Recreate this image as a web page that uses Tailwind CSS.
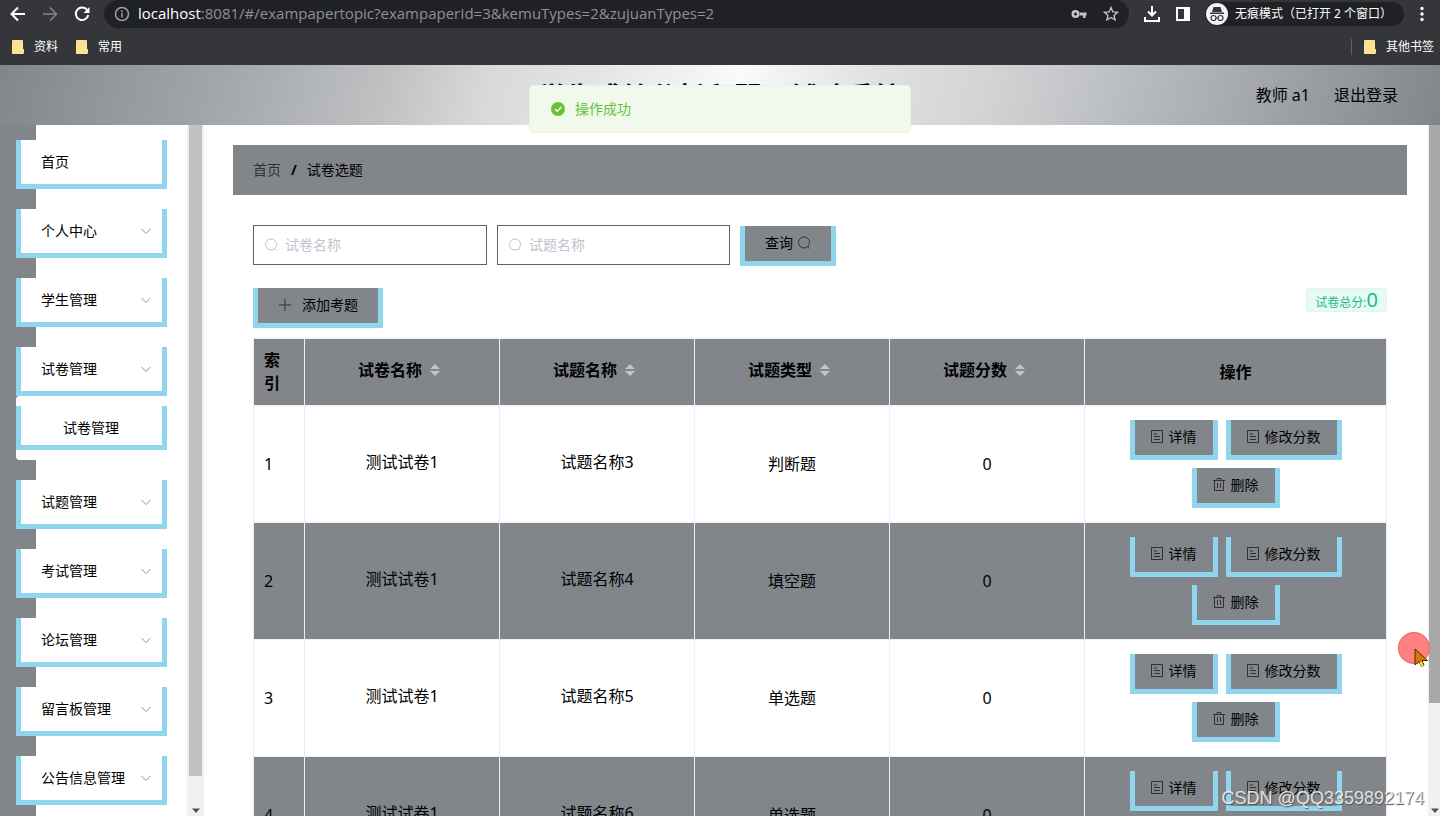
<!DOCTYPE html>
<html lang="zh-CN">
<head>
<meta charset="utf-8">
<title>试卷选题</title>
<script src="https://cdn.jsdelivr.net/npm/@tailwindcss/browser@4"></script>
</head>
<body class="h-screen flex flex-col overflow-hidden bg-white text-black text-sm font-['Noto_Sans','Noto_Sans_CJK_SC',sans-serif]">

<svg class="hidden">
  <symbol id="chev" viewBox="0 0 12 12"><path d="M1.500 4l4.500 4.500L10.500 4" fill="none" stroke="currentColor"/></symbol>
  <symbol id="search" viewBox="0 0 14 14"><circle cx="7" cy="6.500" r="5.500" fill="none" stroke="currentColor"/><path d="M10.500 10.500l2 2" stroke="currentColor"/></symbol>
  <symbol id="doc" viewBox="0 0 12 13"><path d="M.5.5h11v12H.5zM3 4h3M3 6.500h6M3 9.500h6" fill="none" stroke="currentColor"/></symbol>
  <symbol id="trash" viewBox="0 0 12 13"><path d="M0 2.500h12M1.500 2.500v10h9v-10M4 2.500v-2h4v2M4.500 5v5M7.500 5v5" fill="none" stroke="currentColor"/></symbol>
  <symbol id="folder" viewBox="0 0 12 14"><path d="M1 0h9a1 1 0 0 1 1 1v8h1v4a1 1 0 0 1-1 1H0V1a1 1 0 0 1 1-1z" fill="#fde293"/></symbol>
  <symbol id="sort" viewBox="0 0 10 12"><path d="M5 0l5 5H0zM0 7h10l-5 5z" fill="#c0c4cc"/></symbol>
</svg>

<div class="shrink-0 bg-[#35363a] text-white">
  <div class="flex h-7 items-center">
    <button class="ml-2.5 w-4" aria-label="后退"><svg class="size-4" viewBox="0 0 16 16" fill="none" stroke="#fff" stroke-width="2"><path d="M15 8H2M8 1.500L1.500 8 8 14.500"/></svg></button>
    <button class="ml-4 w-4" aria-label="前进"><svg class="size-4" viewBox="0 0 16 16" fill="none" stroke="#85868a" stroke-width="1.500"><path d="M1 8h13M8 1.500L14.500 8 8 14.500"/></svg></button>
    <button class="ml-4 w-4" aria-label="刷新"><svg class="size-4" viewBox="0 0 16 16"><path d="M13.500 4.500A6.300 6.300 0 1 0 14.300 9" fill="none" stroke="#fff" stroke-width="2"/><path d="M15.500 1v6h-6z" fill="#fff"/></svg></button>
    <div class="ml-3.5 flex h-7 flex-1 items-center rounded-full bg-[#202124] px-2.5">
      <svg class="size-4 shrink-0" viewBox="0 0 16 16" fill="none" stroke="#9aa0a6" stroke-width="1.500"><circle cx="8" cy="8" r="6.500"/><path d="M8 7v4.500M8 4.300V6"/></svg>
      <div class="ml-2 flex-1 whitespace-nowrap text-[#8e9196] text-[15px] font-['Open_Sans','Noto_Sans',sans-serif]"><span class="text-white">localhost</span>:8081/#/exampapertopic?exampaperId=3&amp;kemuTypes=2&amp;zujuanTypes=2</div>
      <svg class="h-4 w-4" viewBox="0 0 16 16" fill="#c4c7c5"><path fill-rule="evenodd" d="M4.500 4a4 4 0 1 1 0 8 4 4 0 0 1 0-8zm0 2.500a1.500 1.500 0 1 0 0 3 1.500 1.500 0 0 0 0-3zM8 6.500h7.500v3H14.500V12h-2.500V9.500H8z"/></svg>
      <svg class="ml-4 size-4" viewBox="0 0 16 16" fill="none" stroke="#c4c7c5" stroke-width="1.300"><path d="M8 1.500l1.900 4.400 4.700.4-3.600 3.100 1.100 4.600L8 11.500 3.900 14l1.100-4.600L1.400 6.300l4.700-.4z"/></svg>
    </div>
    <svg class="ml-3.5 h-4 w-[18px]" viewBox="0 0 18 16" fill="none" stroke="#fff" stroke-width="2"><path d="M9 0v9M5 5.500l4 4 4-4M2 11v4h14v-4"/></svg>
    <svg class="ml-3.5 size-4" viewBox="0 0 16 16"><path d="M2 2h12v12H2z" fill="none" stroke="#fff" stroke-width="2"/><path d="M9 2h5v12H9z" fill="#fff"/></svg>
    <div class="ml-3.5 flex h-6 items-center rounded-full bg-[#202124] pr-3">
      <svg class="size-6" viewBox="0 0 24 24"><circle cx="12" cy="12" r="11" fill="#f1f3f4"/><path d="M5 10.500h14v1.500H5zM8.500 5h7l1.500 5H7z" fill="#35363a"/><g fill="none" stroke="#35363a" stroke-width="1.200"><circle cx="8.500" cy="16" r="2.500"/><circle cx="15.500" cy="16" r="2.500"/><path d="M11 16h2"/></g></svg>
      <span class="ml-1.5 whitespace-nowrap text-xs">无痕模式（已打开 2 个窗口）</span>
    </div>
    <svg class="mx-2.5 h-4 w-4" viewBox="0 0 16 16" fill="#fff"><circle cx="8" cy="2.500" r="1.700"/><circle cx="8" cy="8" r="1.700"/><circle cx="8" cy="13.500" r="1.700"/></svg>
  </div>
  <div class="flex h-[37px] items-center px-3 text-xs">
    <svg class="h-3.5 w-3"><use href="#folder"/></svg><a href="#" class="ml-2.5">资料</a>
    <svg class="ml-4.5 h-3.5 w-3"><use href="#folder"/></svg><a href="#" class="ml-2.5">常用</a>
    <span class="ml-auto h-4 w-px bg-[#5f6368]"></span>
    <svg class="ml-3 h-3.5 w-3"><use href="#folder"/></svg><a href="#" class="ml-2.5 -mr-1.5">其他书签</a>
  </div>
</div>

<header class="relative flex h-[60px] shrink-0 items-center justify-end gap-6 bg-[linear-gradient(105deg,#82868a,#a7aaad_17%,#bfc1c3_27%,#d8d9db_34%,#e6e6e9_42%,#fafafa_51%,#e0e1e3_60%,#d3d4d6_68%,#b9bcbf_78%,#a0a4a8_88%,#82868a)] pr-[42px] text-base">
  <h1 class="absolute inset-x-0 top-3 text-center text-[28px] leading-10 font-bold">学生成绩分析和弱项辅助系统</h1>
  <span>教师 a1</span>
  <a href="#">退出登录</a>
  <div role="alert" class="absolute top-5 left-1/2 z-10 flex h-12 w-[382px] -translate-x-1/2 items-center gap-2.5 rounded border border-[#e9f5e1] bg-[#f0f9eb] px-[21px] text-sm text-[#67c23a]">
    <svg class="size-3.5" viewBox="0 0 14 14"><circle cx="7" cy="7" r="7" fill="#67c23a"/><path d="M4 7l2.300 2.300L10.300 5" fill="none" stroke="#fff" stroke-width="1.300"/></svg>
    <p>操作成功</p>
  </div>
</header>

<div class="flex min-h-0 flex-1">
  <aside class="flex w-[204px] shrink-0 overflow-hidden bg-white">
    <nav class="min-w-0 flex-1">
      <ul id="menu" class="min-h-full bg-[linear-gradient(90deg,#82868a_36px,#fff_36px)] pt-[15px] pr-5 pl-4"></ul>
    </nav>
    <div class="flex w-[17px] flex-col items-center bg-[#f1f1f1]">
      <div class="h-[651px] w-[13px] bg-[#c1c1c1]"></div>
      <svg class="mt-auto mb-0.5 h-1.5 w-2" viewBox="0 0 8 5"><path d="M0 0h8L4 4.500z" fill="#505050"/></svg>
    </div>
  </aside>

  <main class="min-w-0 flex-1 overflow-hidden pt-5 pr-[21px] pl-[29px]">
    <div class="flex h-[50px] items-center bg-[#82868a] px-5">
      <a href="#" class="text-[#303133]">首页</a><span class="mx-2.5 font-bold">/</span><span>试卷选题</span>
    </div>
    <div class="px-5 pt-[30px]">
      <form class="flex items-start gap-2.5" onsubmit="return false">
        <div class="relative"><svg class="absolute top-[13px] left-[11px] size-3.5 text-[#c0c4cc]"><use href="#search"/></svg><input aria-label="试卷名称" placeholder="试卷名称" class="block h-10 w-[234px] border border-[#606266] pr-4 pb-0.5 pl-[31px] placeholder:text-[#c0c4cc]"></div>
        <div class="relative"><svg class="absolute top-[13px] left-[11px] size-3.5 text-[#c0c4cc]"><use href="#search"/></svg><input aria-label="试题名称" placeholder="试题名称" class="block h-10 w-[233px] border border-[#606266] pr-4 pb-0.5 pl-[31px] placeholder:text-[#c0c4cc]"></div>
        <button class="mt-px flex h-10 items-center gap-1 border-x-[5px] border-b-[5px] border-[#8fd5ee] bg-[#82868a] px-5 pb-0.5">查询<svg class="size-3.5 text-[#303133]"><use href="#search"/></svg></button>
      </form>
      <div class="mt-[22px] flex items-start justify-between">
        <button class="flex h-10 items-center gap-2.5 border-x-[5px] border-b-[5px] border-[#8fd5ee] bg-[#82868a] px-5 pb-0.5"><svg class="size-3.5" viewBox="0 0 14 14"><path d="M1 7h12M7 1v12" stroke="#303133"/></svg>添加考题</button>
        <span class="flex h-6 items-center rounded border border-[#dcf7ee] bg-[#e7faf3] px-2 text-xs text-[#1fb98a]"><span class="pt-1.5">试卷总分:</span><span class="text-xl leading-6">0</span></span>
      </div>
      <table class="mt-2.5 w-full table-fixed border-collapse border border-[#ebeef5] text-base">
        <colgroup><col class="w-[51px]"><col class="w-[195px]"><col class="w-[195px]"><col class="w-[195px]"><col class="w-[195px]"><col></colgroup>
        <thead><tr id="head" class="h-[67px] bg-[#82868a]"></tr></thead>
        <tbody id="rows"></tbody>
      </table>
    </div>
  </main>

  <div class="flex w-3 shrink-0 flex-col items-end bg-[#f1f1f1]">
    <div class="h-[578px] w-[11px] bg-[#a8a8a8]"></div>
    <svg class="mt-auto mr-px mb-0.5 h-1.5 w-2" viewBox="0 0 8 5"><path d="M0 0h8L4 4.500z" fill="#505050"/></svg>
  </div>
</div>

<svg class="absolute top-[632px] left-[1398px] h-9 w-8" viewBox="0 0 32 36"><circle cx="16" cy="16" r="16" fill="#ff8080"/><circle cx="16" cy="16" r="15.500" fill="none" stroke="#e56b6b"/><path d="M17 17v16l4-3.500 2.500 5 2.500-1.500-2-4.500h5.500z" fill="#d9780a" stroke="#4a2a00"/><path d="M21.500 30.500l2 4 2-1-1.700-4z" fill="#f0f030"/></svg>
<div class="absolute right-4 bottom-1.5 text-lg leading-6 text-white/80 font-['Liberation_Sans',sans-serif] [text-shadow:1px_1px_1px_#555]">CSDN @QQ3359892174</div>

<script>
const use = (id, cls) => `<svg class="${cls}"><use href="#${id}"/></svg>`;
document.getElementById('menu').innerHTML =
  ['首页','个人中心','学生管理','试卷管理','试题管理','考试管理','论坛管理','留言板管理','公告信息管理'].map(t => {
    const item = `<button class="flex h-[49px] w-full items-center justify-between border-x-[5px] border-b-[5px] border-[#8fd5ee] bg-white pr-2.5 pl-5 text-left">${t}${t === '首页' ? '' : use('chev', 'size-3 text-[#909399]')}</button>`;
    const sub = t === '试卷管理'
      ? `<div class="rounded-l bg-white py-2.5"><button class="flex h-11 w-full items-center border-x-[5px] border-b-[5px] border-[#8fd5ee] bg-white pt-1 pl-[42px]">${t}</button></div>`
      : '';
    return `<li class="mb-5">${item}${sub}</li>`;
  }).join('');
document.getElementById('head').innerHTML =
  '<th class="border border-[#ebeef5] px-2.5 text-left leading-[23px]">索引</th>' +
  ['试卷名称','试题名称','试题类型','试题分数'].map(t => `<th class="border border-[#ebeef5] pr-1.5 pb-1"><span class="flex items-center justify-center gap-2">${t}${use('sort', 'h-3 w-2.5')}</span></th>`).join('') +
  '<th class="border border-[#ebeef5]">操作</th>';
const btn = (icon, t) => `<button class="flex h-10 items-center gap-1.5 border-x-[5px] border-b-[5px] border-[#8fd5ee] bg-[#82868a] px-4 pb-0.5">${use(icon, 'h-[13px] w-3 text-[#303133]')}${t}</button>`;
document.getElementById('rows').innerHTML =
  [[3,'判断题'],[4,'填空题'],[5,'单选题'],[6,'单选题']].map(([n, type], i) =>
    `<tr class="h-[117px] ${i % 2 ? 'bg-[#82868a]' : 'bg-white'}"><td class="border border-[#ebeef5] px-2.5">${i + 1}</td>` +
    ['测试试卷1', '试题名称' + n].map(c => `<td class="border border-[#ebeef5] pb-1 text-center">${c}</td>`).join('') +
    [type, 0].map(c => `<td class="border border-[#ebeef5] text-center">${c}</td>`).join('') +
    `<td class="border border-[#ebeef5] px-8 text-sm"><div class="flex flex-wrap justify-center gap-2">${btn('doc', '详情')}${btn('doc', '修改分数')}${btn('trash', '删除')}</div></td></tr>`).join('');
</script>
</body>
</html>
